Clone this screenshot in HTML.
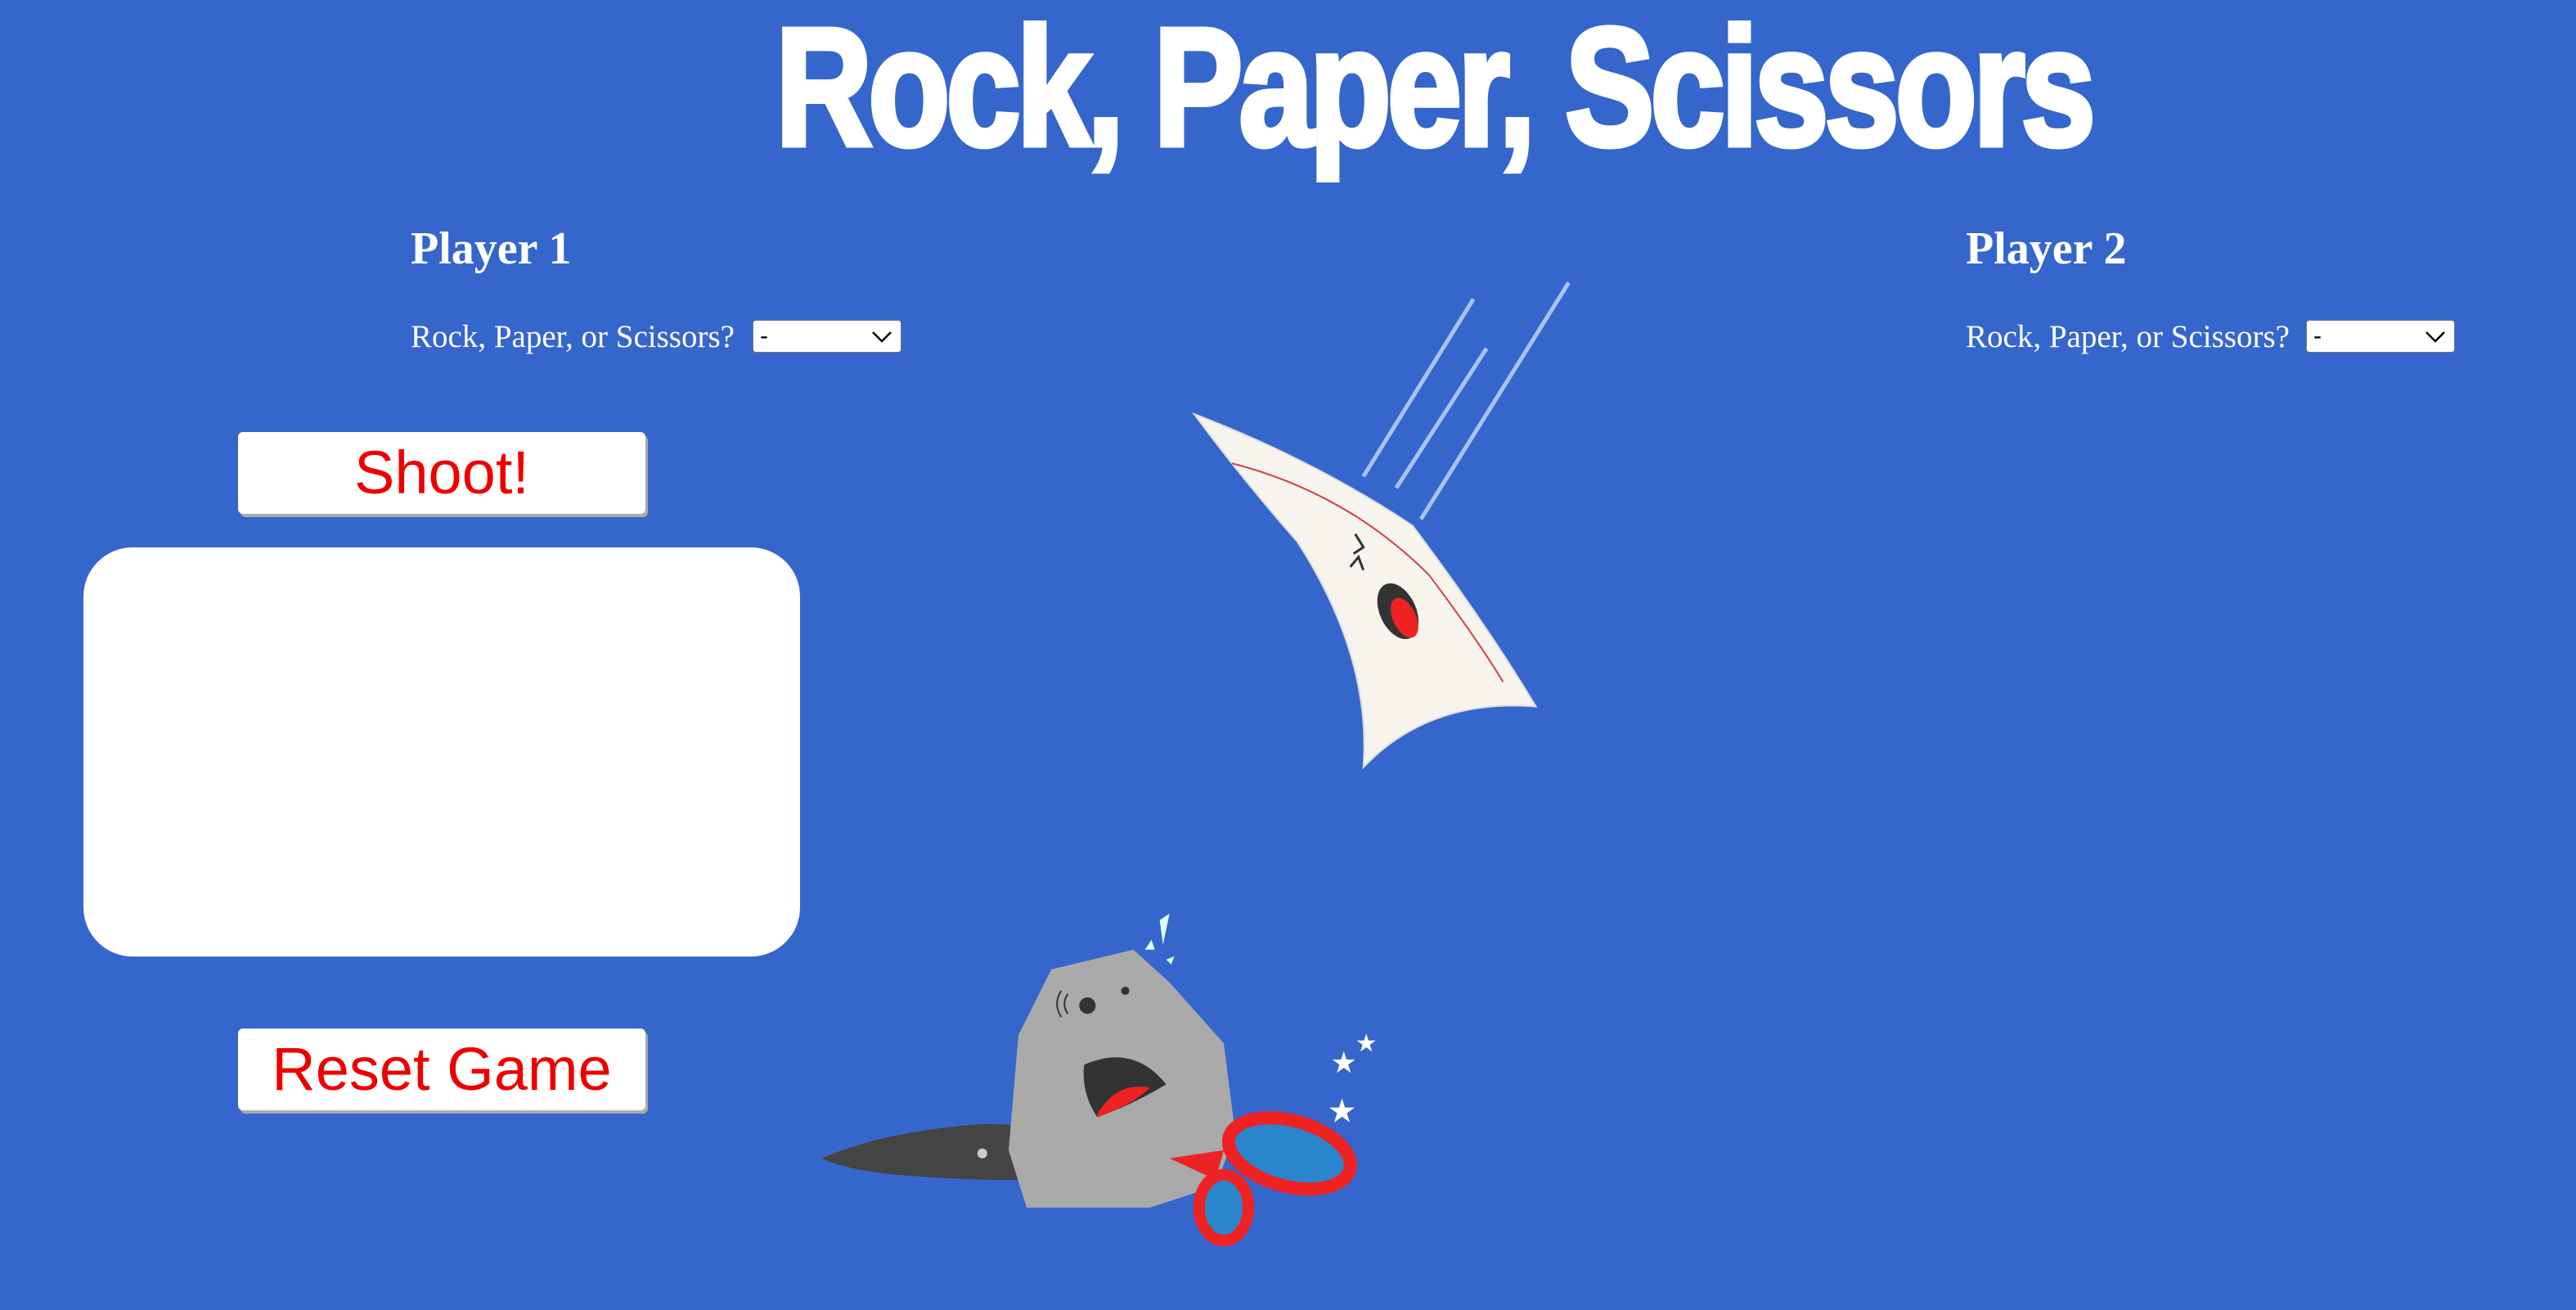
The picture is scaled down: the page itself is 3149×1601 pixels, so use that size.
<!DOCTYPE html>
<html><head><meta charset="utf-8"><style>
html,body{margin:0;padding:0;width:3149px;height:1601px;overflow:hidden;background:#3566cc;}
.abs{position:absolute;}
h1{position:absolute;left:948px;top:4px;margin:0;font-family:"Liberation Sans Narrow","Liberation Sans",sans-serif;font-weight:bold;font-size:205px;line-height:205px;color:#fff;white-space:nowrap;transform-origin:0 0;letter-spacing:-6px;-webkit-text-stroke:7px #fff;}
.ph{position:absolute;font-family:"Liberation Serif",serif;font-weight:bold;font-size:56px;color:#fff;margin:0;}
.lb{position:absolute;font-family:"Liberation Serif",serif;font-size:39px;color:#fff;white-space:nowrap;}
.sel{position:absolute;width:182px;height:40px;background:#fff;border:1px solid #777;border-radius:4px;box-sizing:border-box;font-family:"Liberation Sans",sans-serif;font-size:30px;line-height:38px;padding-left:8px;color:#000;}
.sel svg{position:absolute;right:10px;top:12px;}
.btn{position:absolute;width:498px;height:100px;background:#fff;border-radius:6px;box-shadow:3px 4px 0 #aaa;font-family:"Liberation Sans",sans-serif;color:#e00;font-size:74px;line-height:100px;text-align:center;}
.box{position:absolute;left:102px;top:669px;width:876px;height:500px;background:#fff;border-radius:60px;}
</style></head><body>
<h1 id="t">Rock, Paper, Scissors</h1>
<div class="ph" style="left:502px;top:272px;">Player 1</div>
<div class="lb" style="left:502px;top:389px;">Rock, Paper, or Scissors?</div>
<div class="sel" style="left:920px;top:391px;">-<svg width="26" height="16" viewBox="0 0 26 16"><path d="M2 2 L13 13 L24 2" fill="none" stroke="#000" stroke-width="2.5"/></svg></div>
<div class="ph" style="left:2403px;top:272px;">Player 2</div>
<div class="lb" style="left:2403px;top:389px;">Rock, Paper, or Scissors?</div>
<div class="sel" style="left:2819px;top:391px;">-<svg width="26" height="16" viewBox="0 0 26 16"><path d="M2 2 L13 13 L24 2" fill="none" stroke="#000" stroke-width="2.5"/></svg></div>
<div class="btn" style="left:291px;top:528px;">Shoot!</div>
<div class="box"></div>
<div class="btn" style="left:291px;top:1257px;">Reset Game</div>
<svg class="abs" style="left:0;top:0" width="3149" height="1601" viewBox="0 0 1568.2 797.3">
<g stroke="#a9c3ee" stroke-width="2.5" fill="none">
<line x1="830" y1="290" x2="897" y2="182"/><line x1="850" y1="297" x2="905" y2="212"/><line x1="865" y1="316" x2="955" y2="172"/>
</g>
<path d="M727,252 Q800,280 860,320 Q905,380 935,430 Q870,425 830,467 Q835,400 790,330 Q755,290 727,252Z" fill="#f6f4ec" stroke="#ddd" stroke-width="1"/>
<path d="M750,282 Q820,300 870,350 Q900,390 915,415" fill="none" stroke="#c44" stroke-width="1"/>
<ellipse cx="851" cy="372" rx="11" ry="18" transform="rotate(-25 851 372)" fill="#333"/>
<ellipse cx="855" cy="376" rx="7" ry="13" transform="rotate(-25 855 376)" fill="#e22"/>
<path d="M825,325 l5,8 l-6,4 M822,345 l5,-6 l3,8" fill="none" stroke="#333" stroke-width="1.5"/>
<path d="M500,705 Q540,688 600,684 L700,688 L720,712 Q640,722 560,716 Q520,714 500,705Z" fill="#444"/>
<path d="M640,590 L690,578 L712,598 L745,635 L752,690 L740,722 L700,735 L625,735 L614,700 L620,630Z" fill="#aaa"/>
<path d="M660,648 Q690,635 710,660 Q690,672 668,680 Q658,665 660,648Z" fill="#333"/>
<path d="M668,678 Q680,658 700,662 Q690,672 668,680Z" fill="#e22"/>
<circle cx="662" cy="612" r="5" fill="#333"/><circle cx="685" cy="603" r="2.5" fill="#333"/>
<path d="M650,605 q-4,6 0,12 M646,603 q-5,8 0,16" fill="none" stroke="#333" stroke-width="1"/>
<circle cx="598" cy="702" r="3" fill="#ccc"/>
<path d="M706,560 L712,556 L708,575Z M697,578 l4,-6 l2,6Z M710,584 l5,-2 l-2,5Z" fill="#dff"/>
<ellipse cx="785" cy="702" rx="38" ry="20" fill="#2a86cc" stroke="#e22" stroke-width="8" transform="rotate(15 785 702)"/>
<ellipse cx="745" cy="735" rx="15" ry="20" fill="#2a86cc" stroke="#e22" stroke-width="7"/>
<path d="M712,705 L745,700 L740,718Z" fill="#e22"/>
<g fill="#fff"><text x="810" y="653" font-size="18" font-family="DejaVu Sans">★</text><text x="825" y="640" font-size="15" font-family="DejaVu Sans">★</text><text x="808" y="683" font-size="20" font-family="DejaVu Sans">★</text></g>
</svg>
<script>
var t=document.getElementById('t');var w=t.getBoundingClientRect().width;t.style.transform='scaleX('+(1609/w)+')';
</script>
</body></html>
